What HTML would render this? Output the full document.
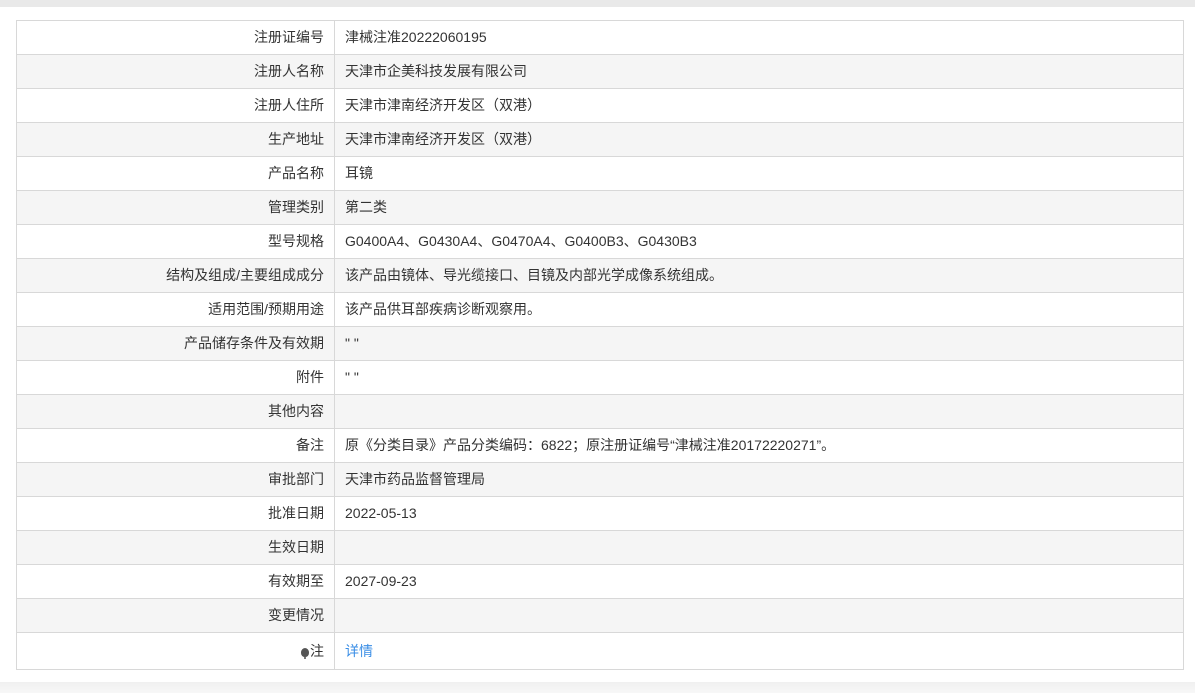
<!DOCTYPE html>
<html><head><meta charset="utf-8"><style>
html,body{margin:0;padding:0;background:#fff;}
body{width:1195px;height:693px;position:relative;overflow:hidden;font-family:"Liberation Sans","Noto Sans CJK SC",sans-serif;font-size:14px;color:#333;}
.top{position:absolute;left:0;top:0;width:1195px;height:7px;background:#e9e9e9;}
.bot{position:absolute;left:0;top:682px;width:1195px;height:11px;background:linear-gradient(#f0f0f0,#f7f7f7);}
table{position:absolute;left:16px;top:20px;width:1168px;border-collapse:collapse;}
td{border:1px solid #d8d8d8;height:33px;padding:0;line-height:33px;}
td.l{width:307px;text-align:right;padding-right:10px;}
td.v{padding-left:10px;}
tr:nth-child(even) td{background:#f5f5f5;}
tr.last td{height:36px;line-height:36px;}
a{color:#3a8ee6;text-decoration:none;}
.bulb{display:inline-block;width:8px;height:9px;background:#555;border-radius:50% 50% 45% 45%;position:relative;vertical-align:-1px;margin-right:1px;}
.bulb:after{content:"";position:absolute;left:3px;top:9px;width:2px;height:2px;background:#777;}
</style></head><body>
<div class="top"></div>
<table>
<tr><td class="l">注册证编号</td><td class="v">津械注准20222060195</td></tr>
<tr><td class="l">注册人名称</td><td class="v">天津市企美科技发展有限公司</td></tr>
<tr><td class="l">注册人住所</td><td class="v">天津市津南经济开发区（双港）</td></tr>
<tr><td class="l">生产地址</td><td class="v">天津市津南经济开发区（双港）</td></tr>
<tr><td class="l">产品名称</td><td class="v">耳镜</td></tr>
<tr><td class="l">管理类别</td><td class="v">第二类</td></tr>
<tr><td class="l">型号规格</td><td class="v">G0400A4、G0430A4、G0470A4、G0400B3、G0430B3</td></tr>
<tr><td class="l">结构及组成/主要组成成分</td><td class="v">该产品由镜体、导光缆接口、目镜及内部光学成像系统组成。</td></tr>
<tr><td class="l">适用范围/预期用途</td><td class="v">该产品供耳部疾病诊断观察用。</td></tr>
<tr><td class="l">产品储存条件及有效期</td><td class="v">" "</td></tr>
<tr><td class="l">附件</td><td class="v">" "</td></tr>
<tr><td class="l">其他内容</td><td class="v"></td></tr>
<tr><td class="l">备注</td><td class="v">原《分类目录》产品分类编码：6822；原注册证编号“津械注准20172220271”。</td></tr>
<tr><td class="l">审批部门</td><td class="v">天津市药品监督管理局</td></tr>
<tr><td class="l">批准日期</td><td class="v">2022-05-13</td></tr>
<tr><td class="l">生效日期</td><td class="v"></td></tr>
<tr><td class="l">有效期至</td><td class="v">2027-09-23</td></tr>
<tr><td class="l">变更情况</td><td class="v"></td></tr>
<tr class="last"><td class="l"><span class="bulb"></span>注</td><td class="v"><a>详情</a></td></tr>
</table>
<div class="bot"></div>
</body></html>
